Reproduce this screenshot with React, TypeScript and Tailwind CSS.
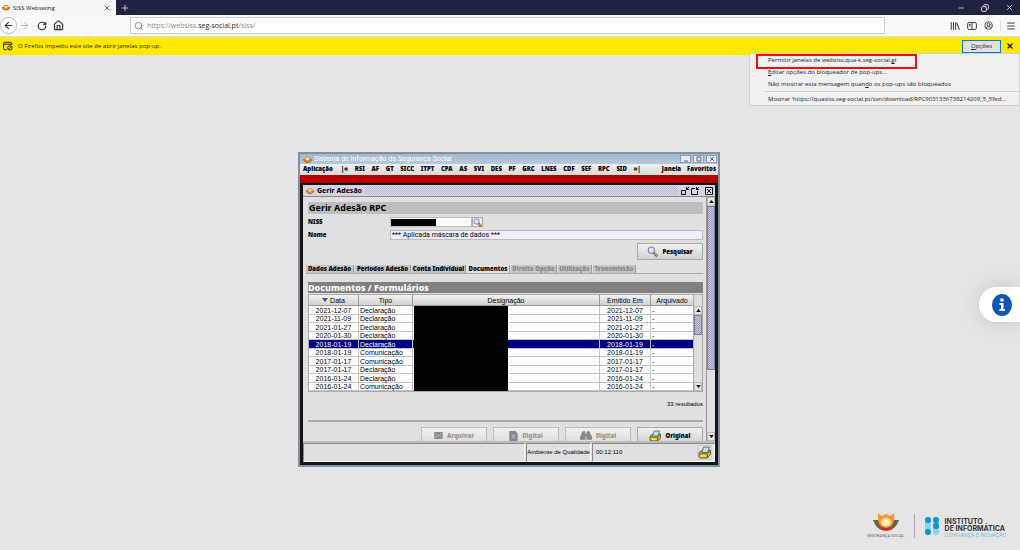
import { ReactNode } from 'react';
import {
  ArrowLeft,
  ArrowRight,
  CircleUserRound,
  Copy,
  House,
  Menu,
  Minus,
  Plus,
  RotateCw,
  Search,
  X,
} from 'lucide-react';

const menuItems = [
  '|«', 'RSI', 'AF', 'GT', 'SICC', 'ITPT', 'CPA', 'AS', 'SVI', 'DES',
  'PF', 'GRC', 'LNES', 'CDF', 'SEF', 'RPC', 'SID', '»|',
];

const tabs = [
  { label: 'Dados Adesão', width: 'w-[48px]' },
  { label: 'Periodos Adesão', width: 'w-[56px]' },
  { label: 'Conta Individual', width: 'w-[54px]' },
  { label: 'Documentos', width: 'w-[43px]', active: true },
  { label: 'Direito Opção', width: 'w-[46px]', disabled: true },
  { label: 'Utilização', width: 'w-[34px]', disabled: true },
  { label: 'Transmissão', width: 'w-[43px]', disabled: true },
];

const documents = [
  { date: '2021-12-07', type: 'Declaração' },
  { date: '2021-11-09', type: 'Declaração' },
  { date: '2021-01-27', type: 'Declaração' },
  { date: '2020-01-30', type: 'Declaração' },
  { date: '2018-01-19', type: 'Declaração', selected: true },
  { date: '2018-01-19', type: 'Comunicação' },
  { date: '2017-01-17', type: 'Comunicação' },
  { date: '2017-01-17', type: 'Declaração' },
  { date: '2016-01-24', type: 'Declaração' },
  { date: '2016-01-24', type: 'Comunicação' },
];

function SissLogo({ className }: { className: string }) {
  return (
    <svg viewBox="0 0 16 12" className={className} aria-hidden="true">
      <path d="M0 5 Q2 12 8 12 Q14 12 16 5 L12 6 H4Z" fill="#c8552c" />
      <path d="M0 5 Q1 8 3 10 L4 6Z M16 5 Q15 8 13 10 L12 6Z" fill="#5d8a3c" />
      <ellipse cx="8" cy="5.5" rx="5.6" ry="4.8" fill="#f28a22" />
      <ellipse cx="8" cy="4.8" rx="3" ry="2.2" fill="#ffe9b8" />
    </svg>
  );
}

function MagnifierIcon({ className }: { className: string }) {
  return (
    <svg viewBox="0 0 12 12" className={className} aria-hidden="true">
      <path d="M7 7 L11 11" stroke="#5c4a10" strokeWidth="2.6" />
      <path d="M7.2 7 L10.8 10.6" stroke="#d9b83c" strokeWidth="1.4" />
      <circle cx="4.8" cy="4.6" r="3.6" fill="#dcdcff" stroke="#6a6a9c" strokeWidth="1" />
      <path d="M3 4.4 Q3.4 2.8 5 2.8" fill="none" stroke="#fff" strokeWidth="1" />
    </svg>
  );
}

function PrinterIcon({ className }: { className: string }) {
  return (
    <svg viewBox="0 0 12 12" className={className} aria-hidden="true">
      <path d="M1 6 L4 4 H11.4 V8 L8.6 11 H2 L1 10Z" fill="#e2c23c" stroke="#4d420f" strokeWidth=".8" />
      <path d="M3.4 6 L5.2 1 H10.6 L8.8 6Z" fill="#b9e2ec" stroke="#42555c" strokeWidth=".7" />
      <path d="M1.2 7.2 H8.6 L11.2 4.6 M8.6 7.2 V10.8" fill="none" stroke="#4d420f" strokeWidth=".7" />
      <path d="M2.6 9.2 H7" stroke="#fff4a8" strokeWidth="1" />
    </svg>
  );
}

function Arrow({ down }: { down?: boolean }) {
  return (
    <svg viewBox="0 0 6 4" className="h-[3px] w-[5px]" aria-hidden="true">
      <path d={down ? 'M0 0 H6 L3 4Z' : 'M0 4 H6 L3 0Z'} fill="#000" />
    </svg>
  );
}

function ScrollButton({ down }: { down?: boolean }) {
  return (
    <button
      aria-label={down ? 'Descer' : 'Subir'}
      className="flex h-[9px] w-full shrink-0 items-center justify-center border border-[#bbb] bg-[#e4e4e4]"
    >
      <Arrow down={down} />
    </button>
  );
}

function WindowButton({ label, path }: { label: string; path: string }) {
  return (
    <button aria-label={label} className="flex h-[8px] w-[11px] items-center justify-center border border-[#8a9cae] bg-[#e6ecf2]">
      <svg viewBox="0 0 6 6" className="h-[6px] w-[6px]" fill="none" stroke="#556677" aria-hidden="true">
        <path d={path} />
      </svg>
    </button>
  );
}

function ActionButton({ children, disabled }: { children: ReactNode; disabled?: boolean }) {
  return (
    <button
      disabled={disabled}
      className="flex h-[17px] w-[66px] shrink-0 items-center justify-center gap-1 border border-[#aaa] bg-linear-to-b from-[#f0f0f0] to-[#d2d2d2] font-[Noto_Sans,sans-serif] text-[6px] leading-[8px] font-black disabled:border-[#bbb] disabled:to-[#dcdcdc] disabled:text-[#999]"
    >
      {children}
    </button>
  );
}

function BrowserChrome() {
  return (
    <header className="font-[Open_Sans,sans-serif] text-[#333]">
      <div className="flex h-[15px] items-center bg-[#202340] text-white">
        <div className="flex h-full w-[116px] items-center bg-[#f6f6f7] pr-[5px] pl-[2px] text-[#222]">
          <SissLogo className="h-[7px] w-[8px]" />
          <span className="ml-[3px] flex-1 text-[6px] leading-[10px]">SISS Webswing</span>
          <button aria-label="Fechar separador"><X className="h-[8px] w-[8px]" /></button>
        </div>
        <button aria-label="Novo separador" className="ml-1"><Plus className="h-[10px] w-[10px]" strokeWidth={1.6} /></button>
        <div className="ml-auto flex items-center gap-[16px] pr-[6px]">
          <button aria-label="Minimizar"><Minus className="h-[8px] w-[8px]" /></button>
          <button aria-label="Restaurar"><Copy className="h-[8px] w-[8px] -scale-x-100" strokeWidth={2.4} /></button>
          <button aria-label="Fechar"><X className="h-[9px] w-[9px]" strokeWidth={1.8} /></button>
        </div>
      </div>

      <div className="flex h-[22px] items-center border-b border-[#ddd] bg-[#f9f9fa] pr-[4px]">
        <button aria-label="Recuar" className="flex h-[17px] w-[17px] items-center justify-center rounded-full border border-[#bbb] bg-white">
          <ArrowLeft className="h-[11px] w-[11px]" strokeWidth={2.4} />
        </button>
        <button aria-label="Avançar" className="ml-[2px] text-[#aaa]"><ArrowRight className="h-[11px] w-[11px]" /></button>
        <button aria-label="Recarregar" className="ml-[7px]"><RotateCw className="h-[10px] w-[10px]" strokeWidth={2.8} /></button>
        <button aria-label="Início" className="ml-[6px]"><House className="h-[11px] w-[11px]" strokeWidth={2.6} /></button>
        <div className="ml-[66px] flex h-[17px] flex-1 items-center border border-[#ccc] bg-white pl-[3px]">
          <Search className="h-[10px] w-[10px] text-[#777]" />
          <a href="#siss" className="ml-[3px] text-[7px] leading-[10px] text-[#888]">
            https://websiss.<span className="text-[#222]">seg-social.pt</span>/siss/
          </a>
        </div>
        <div className="ml-[65px] flex items-center gap-[7px] text-[#444]">
          <button aria-label="Biblioteca">
            <svg viewBox="0 0 16 16" className="h-[10px] w-[10px]" stroke="currentColor" strokeWidth="1.7" fill="none">
              <path d="M2 2 V14 M5.5 2 V14 M9 2 V14 M11 3 L15 14" />
            </svg>
          </button>
          <button aria-label="Barra lateral">
            <svg viewBox="0 0 16 16" className="h-[10px] w-[10px]" stroke="currentColor" strokeWidth="1.6" fill="none">
              <rect x="1" y="2.5" width="14" height="11" rx="2" />
              <path d="M8 3 V13 M3 5.5 H6 M3 8 H6" />
            </svg>
          </button>
          <button aria-label="Conta"><CircleUserRound className="h-[9px] w-[9px]" strokeWidth={2.4} /></button>
          <button aria-label="Menu" className="border-l border-[#ddd] pl-[5px]"><Menu className="h-[10px] w-[10px]" strokeWidth={2.4} /></button>
        </div>
      </div>

      <div className="relative flex h-[18px] items-center bg-[#ffe900] pr-[6px] pl-[3px] text-[#222]">
        <svg viewBox="0 0 16 16" className="h-[10px] w-[10px]" fill="none" stroke="currentColor" strokeWidth="1.6" aria-hidden="true">
          <path d="M6 14 H3 Q1 14 1 12 V4 Q1 2 3 2 H12 Q14 2 14 4 V6 M1 5 H14" />
          <circle cx="11" cy="11" r="3.6" />
          <path d="M8.6 13.4 L13.4 8.6" />
        </svg>
        <p className="ml-[5px] text-[6px] leading-[9px]">O Firefox impediu este site de abrir janelas pop-up.</p>
        <button className="ml-auto h-[13px] w-[39px] border border-[#0a78d7] bg-[#e1e1e1] text-[6px] leading-[9px]">
          <span className="underline">O</span>pções
        </button>
        <button aria-label="Fechar aviso" className="ml-[5px]"><X className="h-[8px] w-[8px]" strokeWidth={4} /></button>
        <PopupMenu />
      </div>
    </header>
  );
}

function PopupMenu() {
  return (
    <div className="absolute top-[16px] right-0 z-10 flex w-[271px] flex-col border border-[#d0d0d0] bg-[#f0f0f0] text-[6px] leading-[11px] text-[#222]">
      <button className="h-[12px] pt-px pl-[18px] text-left">
        Permitir janelas de websiss.qua-k.seg-social.<span className="underline">g</span>t
      </button>
      <button className="h-[12px] pl-[18px] text-left"><span className="underline">E</span>ditar opções do bloqueador de pop-ups...</button>
      <button className="h-[12px] pl-[18px] text-left">Não mostrar esta mensagem quan<span className="underline">d</span>o os pop-ups são bloqueados</button>
      <hr className="mt-px ml-[15px] border-[#d0d0d0]" />
      <button className="h-[13px] truncate pt-px pl-[18px] text-left">
        Mostrar 'https://quasiss.seg-social.pt/ssn/download/RPC9031336738214209_5_5fed...
      </button>
      <div className="pointer-events-none absolute top-0 left-[6px] h-[15px] w-[161px] border-2 border-[#f40d0d]" />
    </div>
  );
}

function DocumentsTable() {
  return (
    <div className="relative mt-px flex border border-[#aaa] bg-[#dedede]">
      <table className="flex-1 table-fixed border-separate border-spacing-0 bg-white text-[7px] leading-[7px] text-black">
        <thead>
          <tr className="h-[11px] bg-linear-to-b from-[#f2f2f2] to-[#cfcfcf]">
            <th className="w-[50px] border-r border-b border-[#999] p-0 font-normal">
              <span className="flex items-center justify-center gap-[2px]">
                <svg viewBox="0 0 6 4" className="h-[4px] w-[6px]" aria-hidden="true"><path d="M0 0 H6 L3 4Z" fill="#4a4aa8" /></svg>
                Data
              </span>
            </th>
            <th className="w-[54px] border-r border-b border-[#999] p-0 font-normal">Tipo</th>
            <th className="border-r border-b border-[#999] p-0 font-normal">Designação</th>
            <th className="w-[51px] border-r border-b border-[#999] p-0 font-normal">Emitido Em</th>
            <th className="w-[42px] border-b border-[#999] p-0 font-normal">Arquivado</th>
          </tr>
        </thead>
        <tbody>
          {documents.map((doc, i) => (
            <tr key={i} className={doc.selected ? 'h-[9px] bg-[#000080] text-white' : 'odd:h-[9px] even:h-[8px]'}>
              <td className="border-r border-b border-[#c4c4c4] p-0 text-center">{doc.date}</td>
              <td className="border-r border-b border-[#c4c4c4] p-0 pl-px">{doc.type}</td>
              <td className="border-r border-b border-[#c4c4c4] p-0" />
              <td className="border-r border-b border-[#c4c4c4] p-0 text-center">{doc.date}</td>
              <td className="border-b border-[#c4c4c4] p-0 pl-px">-</td>
            </tr>
          ))}
        </tbody>
      </table>
      <div className="flex w-[9px] flex-col border-l border-[#aaa] pt-[11px]">
        <ScrollButton />
        <div className="h-[20px] border border-[#7c7c9c] bg-[repeating-conic-gradient(#9c9cbc_0_25%,#c6c6dc_0_50%)] bg-[length:2px_2px]" />
        <div className="flex-1" />
        <ScrollButton down />
      </div>
      <div className="absolute top-[11px] bottom-0 left-[105px] w-[94px] bg-black" />
    </div>
  );
}

function MembershipPane() {
  return (
    <div className="min-w-0 flex-1 overflow-hidden pt-[5px] pr-[3px] pl-[5px]">
      <h1 className="h-[12px] bg-[#bebebe] pl-px text-[9px] leading-[12px] font-bold">Gerir Adesão RPC</h1>

      <div className="mt-[3px] flex h-[10px] items-center">
        <label htmlFor="niss" className="w-[82px] text-[6px] leading-[8px] font-black">NISS</label>
        <div className="flex h-full w-[82px] items-center border border-[#bbb] bg-white">
          <div className="h-[7px] w-[45px] shrink-0 bg-black" />
          <input id="niss" className="h-full w-full min-w-0 outline-none" />
        </div>
        <button aria-label="Procurar NISS" className="flex h-[10px] w-[11px] items-center justify-center border border-[#aaa] bg-[#eee]">
          <MagnifierIcon className="h-[9px] w-[9px]" />
        </button>
      </div>

      <div className="mt-[3px] flex h-[10px] items-center">
        <label htmlFor="nome" className="w-[82px] text-[6px] leading-[8px] font-black">Nome</label>
        <input
          id="nome"
          readOnly
          value="*** Aplicada máscara de dados ***"
          className="h-[10px] min-w-0 flex-1 border border-[#bbb] bg-[#eeeeff] pl-px font-[Roboto,sans-serif] text-[7px] leading-[8px] outline-none"
        />
      </div>

      <div className="mt-[3px] flex justify-end">
        <ActionButton>
          <MagnifierIcon className="h-[11px] w-[11px]" />
          Pesquisar
        </ActionButton>
      </div>

      <div role="tablist" className="mt-[5px] -ml-[2px] flex h-[9px] gap-px border-b border-[#aaa]">
        {tabs.map((tab) => (
          <button
            key={tab.label}
            role="tab"
            aria-selected={!!tab.active}
            disabled={tab.disabled}
            className={`${tab.width} shrink-0 border-r border-[#999] bg-[#c6c6c6] text-center text-[6px] leading-[8px] font-black whitespace-nowrap disabled:text-[#888] aria-selected:bg-[#e0e0e0]`}
          >
            {tab.label}
          </button>
        ))}
      </div>

      <h2 className="mt-[8px] h-[11px] bg-[#808080] text-[9px] leading-[11px] font-extrabold text-white">Documentos / Formulários</h2>
      <div className="font-[Liberation_Sans,sans-serif]">
        <DocumentsTable />
        <p className="mt-[8px] text-right text-[6px] leading-[8px]">33 resultados</p>
      </div>

      <hr className="mt-[12px] border-t-2 border-[#aaa]" />
      <div className="mt-[5px] flex justify-end gap-[6px]">
        <ActionButton disabled>
          <svg viewBox="0 0 12 10" className="h-[7px] w-[9px]" aria-hidden="true">
            <path d="M0 0 H12 V10 H0Z" fill="#888" />
            <path d="M1 1 L6 6 L11 1 M1 9 L4.5 5 M11 9 L7.5 5" fill="none" stroke="#ccc" />
          </svg>
          Arquivar
        </ActionButton>
        <ActionButton disabled>
          <svg viewBox="0 0 10 12" className="h-[10px] w-[9px]" aria-hidden="true">
            <path d="M0 0 H7 L10 3 V12 H0Z" fill="#888" />
            <path d="M3 4 L7 9 M7 4 L3 9" stroke="#ccc" />
          </svg>
          Digital
        </ActionButton>
        <ActionButton disabled>
          <svg viewBox="0 0 14 12" className="h-[11px] w-[12px]" aria-hidden="true">
            <path d="M3 1 H6 L6.5 5 V11 H0 V8Z M8 1 H11 L14 8 V11 H7.5 V5Z M6 4 H8 V7 H6Z" fill="#888" />
          </svg>
          Digital
        </ActionButton>
        <ActionButton>
          <PrinterIcon className="h-[12px] w-[12px]" />
          Original
        </ActionButton>
      </div>
    </div>
  );
}

function SissWindow() {
  return (
    <section className="w-[422px] border-2 border-[#8290a0] bg-[#e0e0e0] font-[Noto_Sans,sans-serif] text-black">
      <div className="flex h-[10px] items-center bg-linear-to-b from-[#a2b9cd] to-[#b6c9da] pr-px pl-[3px]">
        <SissLogo className="h-[7px] w-[9px]" />
        <span className="ml-[2px] flex-1 font-[Roboto,sans-serif] text-[7px] leading-[10px] text-white">
          Sistema de Informação da Segurança Social
        </span>
        <div className="flex gap-[2px]">
          <WindowButton label="Minimizar" path="M1 5 H5" />
          <WindowButton label="Maximizar" path="M1 1 H5 V5 H1Z" />
          <WindowButton label="Fechar" path="M1 1 L5 5 M5 1 L1 5" />
        </div>
      </div>

      <nav className="flex h-[11px] items-center bg-linear-to-b from-[#f0f0f0] to-[#dadada] pr-[2px] pb-px pl-[3px] text-[6px] leading-[9px] font-black">
        <button>Aplicação</button>
        <div className="flex flex-1 justify-between pr-[21px] pl-[8px]">
          {menuItems.map((item) => <button key={item}>{item}</button>)}
        </div>
        <button>Janela</button>
        <button className="ml-[6px]">Favoritos</button>
      </nav>
      <div className="h-[8px] bg-[#b40000]" />

      <div className="border-x-[3px] border-t-2 border-b-[3px] border-[#151515]">
        <div className="flex h-[12px] items-center border-b border-[#888] bg-[#d4d4e2] pr-[2px] pl-[3px]">
          <SissLogo className="h-[6px] w-[8px]" />
          <span className="ml-[3px] text-[7px] leading-[10px] font-bold">Gerir Adesão</span>
          <div className="mx-[3px] h-[9px] flex-1 bg-[repeating-conic-gradient(#b4b4cc_0_25%,#dcdcea_0_50%)] bg-[length:2px_2px]" />
          <div className="flex items-center gap-[2px]">
            <button aria-label="Minimizar janela">
              <svg viewBox="0 0 8 8" className="h-[8px] w-[8px]" fill="none" stroke="#111"><path d="M.5 3.5 H4.5 V7.5 H.5Z M8 0 L5.5 2.5 M5.5 0 V2.5 H8" /></svg>
            </button>
            <button aria-label="Maximizar janela">
              <svg viewBox="0 0 8 8" className="h-[8px] w-[8px]" fill="none" stroke="#111"><path d="M4 1.5 H.5 V7.5 H6.5 V4 M8 0 L5.5 2.5 M5.5 0 V2.5 H8" /></svg>
            </button>
            <button aria-label="Fechar janela" className="ml-[4px]">
              <svg viewBox="0 0 8 8" className="h-[8px] w-[8px]" fill="none" stroke="#111"><path d="M.5 .5 H7.5 V7.5 H.5Z M2 2 L6 6 M6 2 L2 6" /></svg>
            </button>
          </div>
        </div>

        <div className="flex h-[244px]">
          <MembershipPane />
          <div className="flex w-[9px] flex-col border-l border-[#999]">
            <ScrollButton />
            <div className="h-[164px] border border-[#7c7c9c] bg-[repeating-conic-gradient(#9c9cbc_0_25%,#c6c6dc_0_50%)] bg-[length:2px_2px]" />
            <div className="flex-1" />
            <ScrollButton down />
          </div>
        </div>

        <div className="flex h-[21px] gap-px border-t-2 border-[#bbb] font-[Liberation_Sans,sans-serif] text-[6px] leading-[17px]">
          <div className="flex-1 border border-[#888] border-r-white border-b-white" />
          <div className="w-[65px] border border-[#888] border-r-white border-b-white text-center whitespace-nowrap">Ambiente de Qualidade</div>
          <div className="flex w-[123px] items-center justify-between border border-[#888] border-r-white border-b-white pr-[2px] pl-[3px]">
            00:12:110
            <button aria-label="Imprimir" className="border border-[#ccc]"><PrinterIcon className="h-[13px] w-[13px]" /></button>
          </div>
        </div>
      </div>
    </section>
  );
}

function Footer() {
  return (
    <footer className="flex items-center justify-end pr-[14px] pb-[12px]">
      <div className="flex flex-col items-center">
        <svg viewBox="0 0 26 18" className="h-[18px] w-[26px]" aria-hidden="true">
          <path d="M0 7 H5 L9 14 H17 L21 7 H26 Q22 18 13 18 Q4 18 0 7Z" fill="#d2232a" />
          <path d="M0 7 H3 Q5 12 9 15 L8 16.5 Q3 13 0 7Z M26 7 H23 Q21 12 17 15 L18 16.5 Q23 13 26 7Z" fill="#2c8a49" />
          <path d="M5 0 Q8 3 9.500 3 Q13 -1 16.500 3 Q18 3 21 0 Q22.500 15 13 15 Q3.500 15 5 0Z" fill="#f0953a" />
          <ellipse cx="13" cy="9" rx="5.500" ry="4.500" fill="#ffd070" />
          <ellipse cx="13" cy="9.500" rx="3.500" ry="3" fill="#fff6d0" />
        </svg>
        <span className="mt-[2px] font-[Roboto,sans-serif] text-[4px] leading-[5px] text-[#666]">SEGURANÇA SOCIAL</span>
      </div>
      <div className="mr-[10px] ml-[9px] h-[24px] w-px bg-[#aaa]" />
      <svg viewBox="0 0 14 18" className="h-[18px] w-[14px]" aria-hidden="true">
        <rect x="0" y="0" width="6" height="18" rx="3" fill="#8ad2ee" />
        <rect x="8" y="0" width="6" height="18" rx="3" fill="#8ad2ee" />
        <circle cx="3" cy="3" r="3" fill="#0d94c8" />
        <circle cx="3" cy="15" r="3" fill="#0d94c8" />
        <circle cx="11" cy="3" r="3" fill="#0d94c8" />
        <circle cx="11" cy="9" r="3" fill="#0d94c8" />
      </svg>
      <div className="ml-[6px] pt-[4px] font-[Inter,sans-serif] text-[7px] leading-[7px] font-bold text-[#333]">
        <p>INSTITUTO</p>
        <p>DE INFORMÁTICA</p>
        <p className="text-[5px] leading-[6px] font-normal text-[#7fb8d4]">CONFIANÇA E INOVAÇÃO</p>
      </div>
    </footer>
  );
}

export default function App() {
  return (
    <div className="flex min-h-screen flex-col bg-[#e5e5e5]">
      <BrowserChrome />
      <main className="flex flex-1 items-start justify-center pt-[97px] pr-[2px]">
        <SissWindow />
      </main>
      <Footer />
      <button
        aria-label="Informação"
        className="fixed top-[287px] right-0 flex h-[35px] w-[41px] items-center rounded-l-full bg-white pl-[13px] shadow-[0_0_20px_rgba(0,0,0,0.15)]"
      >
        <svg viewBox="0 0 20 22" className="h-[22px] w-[20px]" aria-hidden="true">
          <ellipse cx="10" cy="11" rx="10" ry="11" fill="#0a57b5" />
          <circle cx="10" cy="6" r="1.8" fill="#fff" />
          <path d="M7.5 9 H11.5 V15 H13 V17 H7.5 V15 H9 V11 H7.5Z" fill="#fff" />
        </svg>
      </button>
    </div>
  );
}
